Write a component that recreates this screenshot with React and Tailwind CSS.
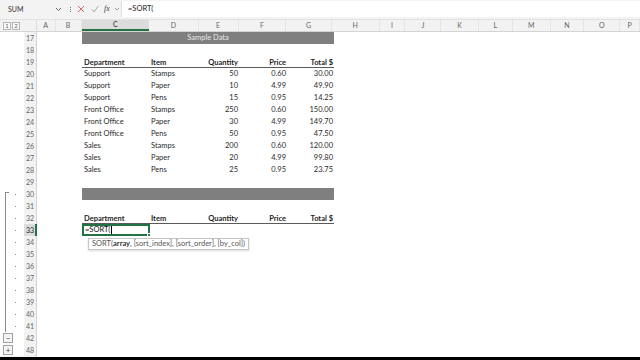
import React from "react";

const cols = [
  { k: "A", w: "w-[19px]" },
  { k: "B", w: "w-[26px]" },
  { k: "C", w: "w-[68px]" },
  { k: "D", w: "w-[50px]" },
  { k: "E", w: "w-[40px]" },
  { k: "F", w: "w-[48px]" },
  { k: "G", w: "w-[46px]" },
  { k: "H", w: "w-[48px]" },
  { k: "I", w: "w-[26px]" },
  { k: "J", w: "w-[36px]" },
  { k: "K", w: "w-[38px]" },
  { k: "L", w: "w-[34px]" },
  { k: "M", w: "w-[38px]" },
  { k: "N", w: "w-[34px]" },
  { k: "O", w: "w-[36px]" },
  { k: "P", w: "w-[20px]" },
];

const data = [
  ["Support", "Stamps", "50", "0.60", "30.00"],
  ["Support", "Paper", "10", "4.99", "49.90"],
  ["Support", "Pens", "15", "0.95", "14.25"],
  ["Front Office", "Stamps", "250", "0.60", "150.00"],
  ["Front Office", "Paper", "30", "4.99", "149.70"],
  ["Front Office", "Pens", "50", "0.95", "47.50"],
  ["Sales", "Stamps", "200", "0.60", "120.00"],
  ["Sales", "Paper", "20", "4.99", "99.80"],
  ["Sales", "Pens", "25", "0.95", "23.75"],
];

const rows = [];
for (let r = 17; r <= 42; r++) rows.push(r);
rows.push(48);

function HeaderRowCells() {
  return (
    <div className="flex w-[252px] h-full border-b border-[#5a5a5a] font-bold text-[#1e1e1e]">
      <div className="w-[68px] pl-[2px] flex items-end pb-[1px]">Department</div>
      <div className="w-[50px] pl-[1px] flex items-end pb-[1px]">Item</div>
      <div className="w-[40px] pr-[2px] flex items-end justify-end pb-[1px]">Quantity</div>
      <div className="w-[48px] pr-[2px] flex items-end justify-end pb-[1px]">Price</div>
      <div className="w-[46px] pr-[1px] flex items-end justify-end pb-[1px]">Total $</div>
    </div>
  );
}

function RowContent({ r }) {
  if (r === 17 || r === 30) {
    return (
      <div className="w-[252px] h-full bg-[#7f7f7f] flex items-center justify-center text-[#e8e8e8]">
        {r === 17 ? "Sample Data" : ""}
      </div>
    );
  }
  if (r === 19 || r === 32) return <HeaderRowCells />;
  if (r >= 20 && r <= 28) {
    const d = data[r - 20];
    return (
      <div className="flex w-[252px] h-full items-center text-[#2a2a2a]">
        <div className="w-[68px] pl-[2px]">{d[0]}</div>
        <div className="w-[50px] pl-[1px]">{d[1]}</div>
        <div className="w-[40px] pr-[2px] text-right">{d[2]}</div>
        <div className="w-[48px] pr-[2px] text-right">{d[3]}</div>
        <div className="w-[46px] pr-[1px] text-right">{d[4]}</div>
      </div>
    );
  }
  if (r === 33) {
    return (
      <div className="flex w-[252px] h-full">
        <div className="relative w-[68px] h-full border-2 border-[#217346] flex items-center pl-[1px] text-[#111]">
          <span>=SORT(</span>
          <span className="w-px h-[8px] bg-black ml-[1px]"></span>
          <div className="absolute right-[-3px] bottom-[-3px] w-[4px] h-[4px] bg-[#217346] border border-white"></div>
          <div className="absolute left-[4px] top-[12px] z-10 whitespace-nowrap bg-white border border-[#c6c6c6] shadow-[0_1px_2px_rgba(0,0,0,0.15)] px-[3px] h-[12px] flex items-center text-[7.5px] text-[#555]">
            SORT(<span className="font-bold text-[#333]">array</span>, [sort_index], [sort_order], [by_col])
          </div>
        </div>
      </div>
    );
  }
  return <div className="w-[252px] h-full"></div>;
}

function Outline({ r }) {
  const inGroup = r >= 30 && r <= 41;
  if (r === 42 || r === 48) {
    return (
      <div className="w-[24px] h-full flex items-center pl-[3px]">
        <div className="w-[10px] h-[10px] border border-[#a0a0a0] bg-[#f4f4f4] flex items-center justify-center text-[8px] leading-none text-[#444]">
          {r === 42 ? "−" : "+"}
        </div>
      </div>
    );
  }
  return (
    <div className="w-[24px] h-full flex items-center">
      <div className="w-[5px] h-full"></div>
      <div
        className={
          inGroup
            ? r === 30
              ? "w-[4px] h-[8px] self-end border-l border-t border-[#8a8a8a]"
              : "w-[4px] h-full border-l border-[#8a8a8a]"
            : "w-[4px] h-full"
        }
      ></div>
      <div className="w-[6px]"></div>
      {inGroup ? <div className="w-[1px] h-[1px] bg-[#888]"></div> : null}
    </div>
  );
}

export default function App() {
  return (
    <div
      className="w-[640px] h-[360px] bg-white flex flex-col overflow-hidden text-[7.5px] text-[#222] leading-none"
      style={{ fontFamily: "Lato, 'Liberation Sans', sans-serif" }}
    >
      {/* formula bar */}
      <div className="h-[18px] bg-[#f3f3f3] flex items-center shrink-0">
        <div className="w-[62px] h-[14px] ml-[4px] flex items-center justify-between px-[4px] text-[#333] text-[7px]">
          <span>SUM</span>
          <svg width="7" height="5" viewBox="0 0 7 5">
            <path d="M1 1 L3.5 3.5 L6 1" fill="none" stroke="#555" strokeWidth="0.9" />
          </svg>
        </div>
        <div className="w-[8px] flex flex-col items-center gap-[1px]">
          <div className="w-[1px] h-[1px] bg-[#777]"></div>
          <div className="w-[1px] h-[1px] bg-[#777]"></div>
          <div className="w-[1px] h-[1px] bg-[#777]"></div>
        </div>
        <div className="w-[14px] flex justify-center">
          <svg width="8" height="8" viewBox="0 0 8 8">
            <path d="M1 1 L7 7 M7 1 L1 7" stroke="#d9534f" strokeWidth="0.9" />
          </svg>
        </div>
        <div className="w-[13px] flex justify-center">
          <svg width="8" height="8" viewBox="0 0 8 8">
            <path d="M1 4.5 L3 6.8 L7.2 1.2" fill="none" stroke="#9a9a9a" strokeWidth="0.9" />
          </svg>
        </div>
        <div className="w-[12px] flex justify-center italic text-[#444] text-[8px]" style={{ fontFamily: "'Liberation Serif', serif" }}>
          fx
        </div>
        <div className="w-[8px] flex justify-center">
          <svg width="6" height="4" viewBox="0 0 6 4">
            <path d="M1 1 L3 3 L5 1" fill="none" stroke="#888" strokeWidth="0.8" />
          </svg>
        </div>
        <div className="flex-1 h-[16px] bg-white border-l border-[#e0e0e0] flex items-center pl-[6px] text-[#222] text-[7.5px]">
          =SORT(
        </div>
      </div>
      <div className="h-[2px] bg-[#f3f3f3] shrink-0 border-b border-[#e2e2e2]"></div>

      {/* column headers */}
      <div className="h-[12px] flex shrink-0 bg-[#f2f2f2] border-b border-[#d4d4d4] text-[#666] text-[7px]">
        <div className="w-[24px] h-full flex items-center pl-[3px] gap-[1px]">
          <div className="w-[8px] h-[8px] border border-[#b5b5b5] bg-[#fafafa] flex items-center justify-center text-[6px]">1</div>
          <div className="w-[8px] h-[8px] border border-[#b5b5b5] bg-[#fafafa] flex items-center justify-center text-[6px]">2</div>
        </div>
        <div className="w-[13px] h-full border-r border-[#dcdcdc]"></div>
        {cols.map((c) =>
          c.k === "C" ? (
            <div key={c.k} className={c.w + " h-full flex items-center justify-center bg-[#dcdcdc] border-b-2 border-[#217346] text-[#2a2a2a]"}>
              {c.k}
            </div>
          ) : (
            <div key={c.k} className={c.w + " h-full flex items-center justify-center border-r border-[#e4e4e4]"}>
              {c.k}
            </div>
          )
        )}
      </div>

      {/* rows */}
      <div className="flex flex-col shrink-0">
        {rows.map((r) => (
          <div key={r} className="h-[12px] flex">
            <Outline r={r} />
            <div
              className={
                r === 33
                  ? "w-[13px] h-full flex items-center justify-end pr-[1px] bg-[#dcdcdc] border-r-2 border-[#217346] text-[#2a2a2a] text-[7px]"
                  : "w-[13px] h-full flex items-center justify-end pr-[2px] bg-[#f2f2f2] border-r border-[#d4d4d4] text-[#666] text-[7px]"
              }
            >
              {r}
            </div>
            <div className="w-[45px] h-full"></div>
            <RowContent r={r} />
          </div>
        ))}
      </div>
      <div className="flex-1 bg-[#f2f2f2] flex">
        <div className="w-[24px]"></div>
        <div className="w-[13px] bg-[#f2f2f2] border-r border-[#d4d4d4]"></div>
        <div className="flex-1 bg-white"></div>
      </div>
      <div className="h-[3px] bg-black shrink-0"></div>
    </div>
  );
}
